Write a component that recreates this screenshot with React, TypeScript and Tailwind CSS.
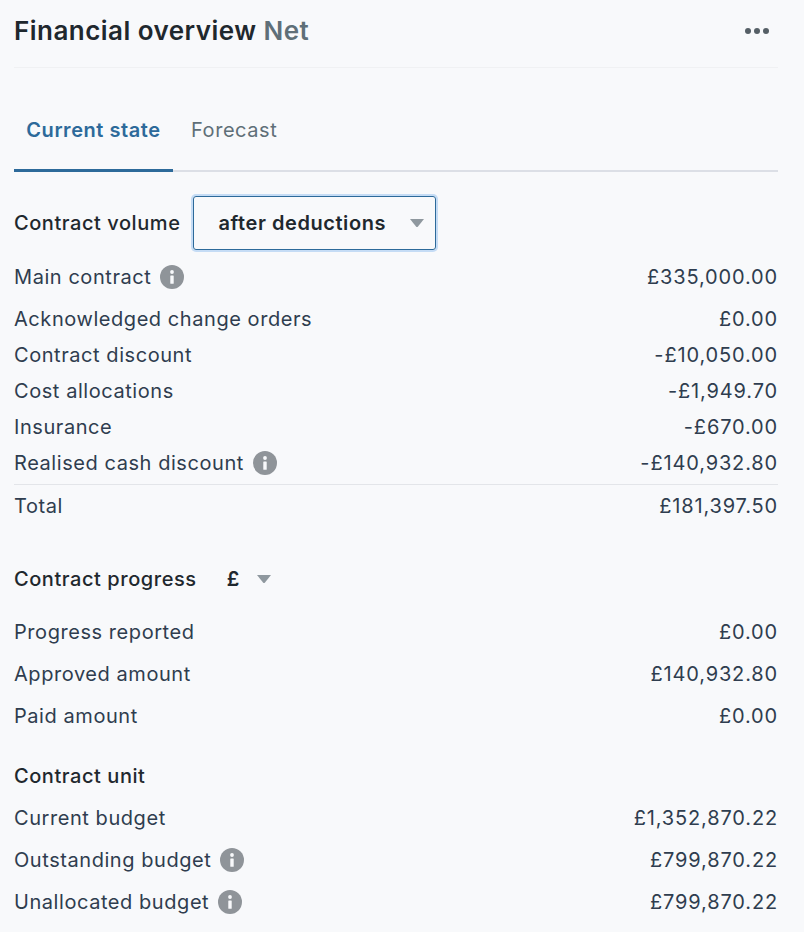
const font = "font-['Inter',sans-serif] tracking-[0.56px]"

function InfoIcon() {
  return (
    <svg className="h-6 w-6 shrink-0" viewBox="0 0 24 24">
      <circle cx="12" cy="12" r="12" fill="#8f9499" />
      <circle cx="12" cy="7" r="1.9" fill="#f8f9fb" />
      <rect x="10.3" y="10.4" width="3.4" height="8.4" rx="0.6" fill="#f8f9fb" />
    </svg>
  )
}

function Caret() {
  return (
    <svg className="h-2 w-[14px]" viewBox="0 0 14 8">
      <path d="M0 0h14L8 7.4a1.3 1.3 0 0 1-2 0z" fill="#8f989f" />
    </svg>
  )
}

function Row({ label, value, info, className = 'h-[36px]' }: { label: string; value: string; info?: boolean; className?: string }) {
  return (
    <div className={`flex items-center justify-between text-[20px] text-[#2f3d4f] ${className}`}>
      <div className="flex items-center gap-[9px]">
        <span>{label}</span>
        {info && <InfoIcon />}
      </div>
      <span className="tracking-[0.85px]">{value}</span>
    </div>
  )
}

export default function App() {
  return (
    <div className={`${font} min-h-[932px] w-full bg-[#f8f9fb] pr-[26px] pl-[14px]`}>
      <div className="flex h-[68px] items-center justify-between border-b border-[#f0f1f3] pb-[6px]">
        <h1 className="text-[26px] font-semibold tracking-[0.46px] text-[#1f282e]">
          Financial overview <span className="text-[#5f6f78]">Net</span>
        </h1>
        <svg className="mr-[8px] h-2 w-[26px]" viewBox="0 0 26 8" fill="#555f66">
          <circle cx="4" cy="4" r="3" />
          <circle cx="13" cy="4" r="3" />
          <circle cx="22" cy="4" r="3" />
        </svg>
      </div>

      <div className="mt-[36px] flex h-[68px] border-b-2 border-[#dcdfe6] text-[20px]">
        <div className="-mb-[2px] flex h-[68px] w-[159px] items-center justify-center border-b-[3px] border-[#2d6a9a] pb-[14px] font-semibold text-[#2d6a9a]">
          Current state
        </div>
        <div className="ml-[18px] flex items-center pb-[14px] text-[#5f6f78]">Forecast</div>
      </div>

      <div className="mt-[24px] flex items-center gap-[13px] text-[20px] font-medium text-[#1f282e]">
        <span>Contract volume</span>
        <div className="flex h-[54px] w-[243px] items-center justify-between rounded-[3px] border border-[#2d6a9a] pr-[11px] pl-[24px] font-semibold shadow-[0_0_0_2px_#c5dcf5]">
          <span>after deductions</span>
          <Caret />
        </div>
      </div>

      <Row label="Main contract" value="£335,000.00" info className="mt-[6px] h-[42px]" />
      <Row label="Acknowledged change orders" value="£0.00" className="h-[42px]" />
      <Row label="Contract discount" value="-£10,050.00" className="h-[30px]" />
      <Row label="Cost allocations" value="-£1,949.70" className="h-[42px]" />
      <Row label="Insurance" value="-£670.00" className="h-[30px]" />
      <Row label="Realised cash discount" value="-£140,932.80" className="h-[42px]" info />
      <div className="border-t border-[#e3e5e9]">
        <Row label="Total" value="£181,397.50" className="h-[41px]" />
      </div>

      <div className="mt-[38px] flex h-[30px] items-center text-[20px] font-medium text-[#1f282e]">
        <span>Contract progress</span>
        <span className="ml-[30px] font-semibold">£</span>
        <span className="ml-[17px] flex"><Caret /></span>
      </div>

      <Row label="Progress reported" value="£0.00" className="mt-[17px] h-[42px]" />
      <Row label="Approved amount" value="£140,932.80" className="h-[42px]" />
      <Row label="Paid amount" value="£0.00" className="h-[42px]" />

      <div className="mt-[24px] flex h-[30px] items-center text-[20px] font-medium text-[#1f282e]">Contract unit</div>
      <Row label="Current budget" value="£1,352,870.22" className="mt-[6px] h-[42px]" />
      <Row label="Outstanding budget" value="£799,870.22" info className="h-[42px]" />
      <Row label="Unallocated budget" value="£799,870.22" info className="h-[42px]" />
    </div>
  )
}
